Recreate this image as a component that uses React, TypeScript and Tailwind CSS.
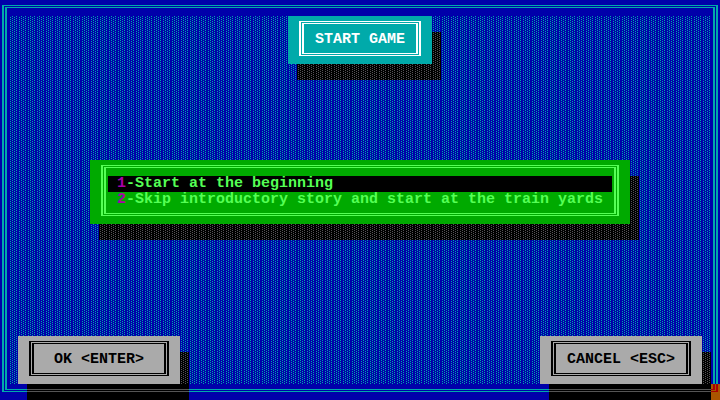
import React, { useId, useState } from 'react';
import clsx from 'clsx';

const options = [
  { key: '1', label: 'Start at the beginning' },
  { key: '2', label: 'Skip introductory story and start at the train yards' }
];

// Light shade fill, one 9px text cell per tile
function Shade({ className }: { className?: string }) {
  const id = useId();

  return (
    <svg className={clsx('block w-full', className)} shapeRendering="crispEdges" aria-hidden="true">
      <defs>
        <pattern id={id} width="9" height="2" patternUnits="userSpaceOnUse">
          <path d="M3 0h1v1h-1zM7 0h1v1h-1zM1 1h1v1h-1zM5 1h1v1h-1z" fill="currentColor" />
        </pattern>
      </defs>
      <rect width="100%" height="100%" fill={`url(#${id})`} />
    </svg>
  );
}

function DoubleFrame({ className, children }: { className?: string; children: React.ReactNode }) {
  return (
    <div className={clsx('border-x-2 border-y border-current p-px', className)}>
      <div className="h-full border-x-2 border-y border-current px-[2px] pt-2 pb-[5px]">
        {children}
      </div>
    </div>
  );
}

function Shadow({ overEdge = false }: { overEdge?: boolean }) {
  return (
    <div className="absolute left-[9px] top-4 flex h-full w-full flex-col bg-black text-[#555555]">
      <Shade className="h-0 flex-1" />
      {overEdge && (
        <div className="h-4 pt-[5px]">
          <div className="h-[3px] border-y border-current" />
        </div>
      )}
    </div>
  );
}

function DialogButton({ className, children }: { className: string; children: React.ReactNode }) {
  return (
    <div className={clsx('relative', className)}>
      <Shadow overEdge />
      <button
        type="button"
        className="relative block w-full bg-[#aaaaaa] px-[11px] pt-[5px] pb-2 text-center text-black"
      >
        <DoubleFrame>{children}</DoubleFrame>
      </button>
    </div>
  );
}

function Pointer() {
  return (
    <svg
      className="absolute right-0 bottom-0 h-4 w-[9px] bg-[#aa5500] text-[#aa0000]"
      viewBox="0 0 9 16"
      shapeRendering="crispEdges"
      aria-hidden="true"
    >
      <path d="M2 0h2v6h-4v-1h2zM5 0h2v8h-7v-1h5z" fill="currentColor" />
    </svg>
  );
}

export default function App() {
  const [selected, setSelected] = useState('1');

  return (
    <div className="relative flex min-h-screen flex-col overflow-hidden bg-[#0000aa] py-4 font-['Liberation_Mono',monospace] text-[15px] leading-4 font-bold">
      {/* Desktop backdrop */}
      <div className="absolute inset-0 px-[2px] pt-[5px] pb-2 text-[#00aaaa]">
        <DoubleFrame className="h-full">
          <Shade className="h-full" />
        </DoubleFrame>
      </div>

      <header className="relative mx-auto w-36">
        <Shadow />
        <div className="relative bg-[#00aaaa] px-[11px] pt-[5px] pb-2 text-center text-white">
          <DoubleFrame>
            <h1>START GAME</h1>
          </DoubleFrame>
        </div>
      </header>

      <main className="relative flex flex-1 items-center justify-center pb-4">
        <div className="relative w-[540px] max-w-full">
          <Shadow />
          <div className="relative bg-[#00aa00] px-[11px] pt-[5px] pb-2 text-[#55ff55]">
            <DoubleFrame>
              <ul>
                {options.map((option) => (
                  <li key={option.key}>
                    <button
                      type="button"
                      aria-pressed={selected === option.key}
                      onClick={() => setSelected(option.key)}
                      className={clsx(
                        'block w-full pl-[9px] text-left whitespace-nowrap',
                        selected === option.key && 'bg-black'
                      )}
                    >
                      <span className="text-[#aa00aa]">{option.key}</span>-{option.label}
                    </button>
                  </li>
                ))}
              </ul>
            </DoubleFrame>
          </div>
        </div>
      </main>

      <footer className="relative flex justify-between px-[18px]">
        <DialogButton className="w-[162px]">OK &lt;ENTER&gt;</DialogButton>
        <DialogButton className="w-[162px]">CANCEL &lt;ESC&gt;</DialogButton>
      </footer>

      <Pointer />
    </div>
  );
}
